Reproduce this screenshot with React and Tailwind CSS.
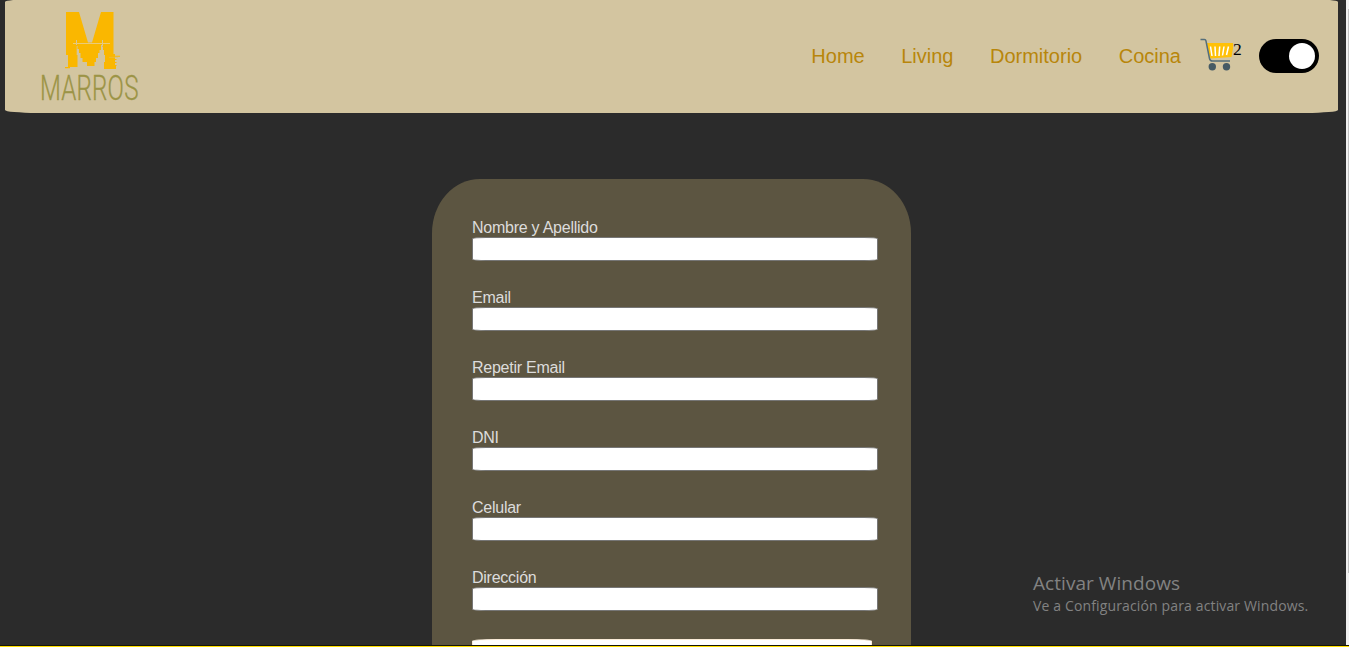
const links = ["Home", "Living", "Dormitorio", "Cocina"];
const fields = ["Nombre y Apellido", "Email", "Repetir Email", "DNI", "Celular", "Dirección"];

function Logo() {
  return (
    <svg width="110" height="112" viewBox="35 0 110 112" className="block shrink-0 overflow-visible" aria-label="Marros">
      <g fill="#fab700">
        <path d="M66 12H79L88 42.500H92L101 12H113.500V54H115V65.500H116V69H104V62H105V55H104V50H103V46.500H102V45H101V50H99.500V53H98V58H96V62H94.500V66H87V62H82.500V58H80.500V53H79V49H77.500V46H76.700V55H77.500V67H68V55H66Z" />
        <path d="M82 43H97V47H82Z" />
        <path d="M109 55.700H120V56.700H109ZM65 67H70V68.300H65Z" />
        <path d="M115 59H116.500V60H115ZM115 62H116.500V63H115ZM115 65H116.500V66H115Z" />
      </g>
      <path d="M76 40H77V45H76ZM102 40H103V46H102Z" fill="#d3c5a0" />
      <path d="M73 43.500H110" stroke="#eacb78" strokeWidth="1" />
      <path d="M109 57.300H118" stroke="#dfbd61" strokeWidth="0.600" />
      <text
        transform="translate(40 99.700) scale(0.7 1)"
        textLength="140.700"
        fill="#9c9446"
        stroke="#9c9446"
        strokeWidth="0.300"
        fontSize="34.500"
        fontWeight="300"
        fontFamily="Roboto, 'Liberation Sans', sans-serif"
      >
        MARROS
      </text>
    </svg>
  );
}

function Cart() {
  return (
    <svg width="33" height="34" viewBox="1200 38 33 34" className="-mt-0.5 block shrink-0">
      <path d="M1207 43H1234L1231.500 57L1210 58.500Z" fill="#ffc107" />
      <path
        d="M1210.500 46.500L1212 56M1215 46.500L1215.500 56M1219.700 46.500L1219 56M1224 46.500L1222.500 55.500M1228.500 46.500L1226.500 55"
        stroke="#fff"
        strokeWidth="1.500"
      />
      <path
        d="M1200.500 39.500H1204.500Q1205.700 39.500 1206 41L1209.500 58.500Q1210 61 1212.500 61H1230"
        fill="none"
        stroke="#546e7a"
        strokeWidth="1.500"
      />
      <circle cx="1212.300" cy="66.700" r="3.700" fill="#455a64" />
      <circle cx="1226.500" cy="66.700" r="3.700" fill="#455a64" />
    </svg>
  );
}

export default function App() {
  return (
    <div className="relative flex h-[647px] w-[1349px] overflow-hidden bg-[#2b2b2b] font-['Liberation_Sans',Arial,sans-serif]">
      <main className="flex w-[1346px] flex-col">
        <header className="-mt-px ml-[5px] flex h-[114px] w-[1333px] shrink-0 items-center rounded-[32px/3px] bg-[#d3c5a0] pl-[30px]">
          <Logo />
          <nav className="ml-auto flex gap-[36.5px] text-[20px] leading-6 text-[#b8860b]">
            {links.map((link) => (
              <a key={link} href="#">{link}</a>
            ))}
          </nav>
          <div className="ml-[19px] flex items-center">
            <Cart />
            <span className="-mt-3.5 w-2 font-['Liberation_Serif',serif] text-[17.5px] leading-5 text-black">2</span>
          </div>
          <button className="mr-[19px] ml-[18px] flex h-[34px] w-[60px] items-center justify-end rounded-full bg-black pr-1">
            <span className="size-[26px] rounded-full bg-white" />
          </button>
        </header>
        <form className="mt-[66px] ml-[432px] flex h-[560px] w-[479px] shrink-0 flex-col rounded-t-[48px_54px] bg-[#5c5541] pt-[39px] pl-10">
          {fields.map((field) => (
            <label key={field} className="block h-[70px] shrink-0 text-[16px] leading-[19px] tracking-[-0.25px] text-[#dcdcdc]">
              {field}
              <input className="block h-6 w-[406px] rounded-[14px/1.7px] border border-[#767676] bg-white" />
            </label>
          ))}
          <div className="mt-px h-10 w-[400px] shrink-0 rounded-[24px/2px] border border-[#faebd7] bg-white" />
        </form>
      </main>
      <div className="flex w-[3px] flex-col items-end bg-[#f1f1f1] pt-[9px]">
        <div className="h-[564px] w-px bg-[#c1c1c1]" />
      </div>
      <aside className="absolute top-[571px] left-[1033px] font-['Open_Sans','Noto_Sans',sans-serif] whitespace-nowrap text-[#828282]">
        <p className="text-[19px] leading-6 tracking-[0.05px]">Activar Windows</p>
        <p className="text-[14px] leading-[22px] tracking-[0.14px]">Ve a Configuración para activar Windows.</p>
      </aside>
      <div className="absolute bottom-0 left-0 h-0.5 w-full border-t border-[#171606] bg-[#ffdf00]" />
    </div>
  );
}
